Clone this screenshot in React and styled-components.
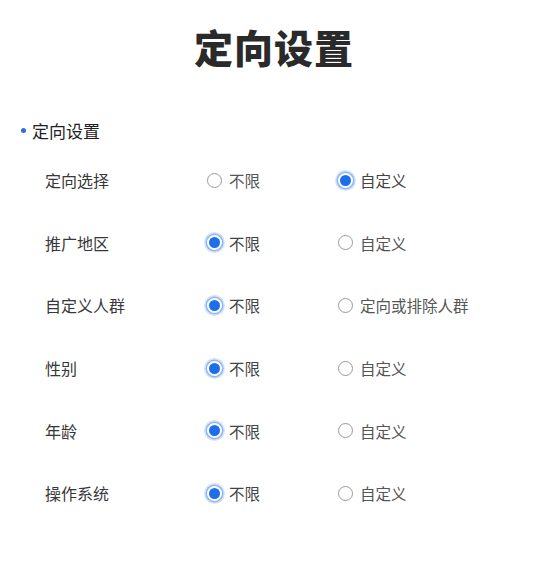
import React from "react";
import styled, { createGlobalStyle } from "styled-components";

const Global = createGlobalStyle`
  html, body { margin: 0; padding: 0; background: #fff; }
  body { font-family: "Noto Sans CJK SC", "Noto Sans", sans-serif; color: #333; }
`;

const Page = styled.div`
  width: 534px;
  height: 576px;
  background: #fff;
  display: flex;
  flex-direction: column;
`;

const Title = styled.h1`
  margin: 0;
  padding-top: 20px;
  height: 52px;
  line-height: 52px;
  text-align: center;
  font-size: 39px;
  font-weight: 900;
  color: #2a2a2a;
  letter-spacing: 1px;
  padding-left: 14px;
`;

const Section = styled.div`
  display: flex;
  align-items: center;
  gap: 6px;
  margin-top: 46px;
  padding-left: 21px;
  height: 24px;
  font-size: 17px;
  color: #222;
`;

const Dot = styled.span`
  width: 5px;
  height: 5px;
  border-radius: 50%;
  background: #2f6fe0;
`;

const List = styled.div`
  margin-top: 7px;
  padding-left: 45px;
  display: flex;
  flex-direction: column;
`;

const Row = styled.div`
  display: grid;
  grid-template-columns: 162px 131px auto;
  align-items: center;
  height: 62.6px;
`;

const Label = styled.div`
  font-size: 16px;
  color: #383838;
`;

const Option = styled.div`
  display: flex;
  align-items: center;
  gap: 7px;
  font-size: 15.5px;
  color: ${(p) => (p.$checked ? "#444" : "#555")};
`;

const Radio = styled.span`
  box-sizing: border-box;
  width: 15px;
  height: 15px;
  border-radius: 50%;
  flex: none;
  ${(p) =>
    p.$checked
      ? `background: #1c6fe9; border: 2.5px solid #fff; box-shadow: 0 0 0 1.5px #8fb6f2, 0 0 0 3px #d6e5fb;`
      : `background: #fff; border: 1.3px solid #9a9a9a;`}
`;

const rows = [
  ["定向选择", "不限", "自定义", 1],
  ["推广地区", "不限", "自定义", 0],
  ["自定义人群", "不限", "定向或排除人群", 0],
  ["性别", "不限", "自定义", 0],
  ["年龄", "不限", "自定义", 0],
  ["操作系统", "不限", "自定义", 0],
];

export default function App() {
  return (
    <Page>
      <Global />
      <Title>定向设置</Title>
      <Section>
        <Dot />
        定向设置
      </Section>
      <List>
        {rows.map(([label, a, b, sel]) => (
          <Row key={label}>
            <Label>{label}</Label>
            <Option $checked={sel === 0}>
              <Radio $checked={sel === 0} />
              {a}
            </Option>
            <Option $checked={sel === 1}>
              <Radio $checked={sel === 1} />
              {b}
            </Option>
          </Row>
        ))}
      </List>
    </Page>
  );
}
